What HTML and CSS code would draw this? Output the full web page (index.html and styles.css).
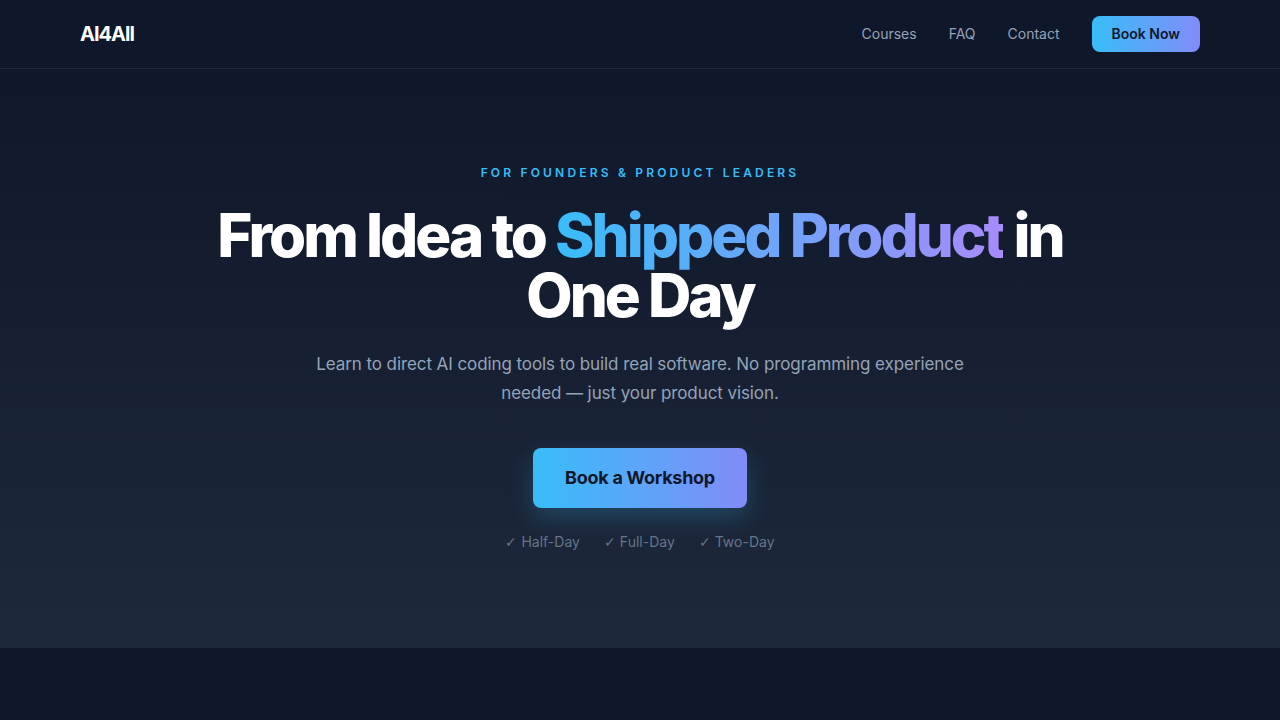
FILE: index.html
```html
<!DOCTYPE html>
<html>
<head>
  <meta charset="UTF-8">
  <title>AI4All</title>
  <link rel="stylesheet" href="styles.css">
</head>
<body>
  <header class="site-header">
    <div class="nav-inner">
      <a class="logo" href="#">AI4All</a>
      <nav class="nav-links">
        <a href="#">Courses</a>
        <a href="#">FAQ</a>
        <a href="#">Contact</a>
        <a class="btn-small" href="#">Book Now</a>
      </nav>
    </div>
  </header>

  <section class="hero">
    <p class="eyebrow">For Founders &amp; Product Leaders</p>
    <h1 class="hero-title">From Idea to <span class="grad">Shipped Product</span> in One Day</h1>
    <p class="hero-sub">Learn to direct AI coding tools to build real software. No programming experience needed — just your product vision.</p>
    <a class="btn-big" href="#">Book a Workshop</a>
    <ul class="formats">
      <li><span class="tick">✓</span> Half-Day</li>
      <li><span class="tick">✓</span> Full-Day</li>
      <li><span class="tick">✓</span> Two-Day</li>
    </ul>
  </section>

  <section class="next"></section>
</body>
</html>
```

FILE: styles.css
```css
* { box-sizing: border-box; }
body {
  margin: 0;
  font-family: Inter, "Noto Sans", sans-serif;
  background: #0f172a;
  color: #fff;
}
a { text-decoration: none; }

.site-header { border-bottom: 1px solid #1e293b; }
.nav-inner {
  height: 68px;
  padding: 0 80px;
  display: flex;
  align-items: center;
  justify-content: space-between;
}
.logo {
  color: #fff;
  font-size: 20px;
  font-weight: 700;
  letter-spacing: -0.05em;
}
.nav-links {
  display: flex;
  align-items: center;
  gap: 32px;
  padding-bottom: 1px;
}
.nav-links a {
  color: #94a3b8;
  font-size: 14px;
}
.nav-links .btn-small {
  color: #0f172a;
  font-weight: 600;
  padding: 8px 20px;
  line-height: 20px;
  border-radius: 8px;
  background: linear-gradient(90deg, #38bdf8, #818cf8);
}

.hero {
  background: linear-gradient(180deg, #0f172a, #1e293b);
  padding: 94px 24px 96px;
  text-align: center;
  display: flex;
  flex-direction: column;
  align-items: center;
}
.eyebrow {
  margin: 0 0 22px;
  color: #38bdf8;
  font-size: 12px;
  line-height: 20px;
  font-weight: 600;
  letter-spacing: 0.265em;
  text-transform: uppercase;
}
.hero-title {
  margin: 0 0 25px;
  max-width: 896px;
  font-size: 60px;
  line-height: 60px;
  font-weight: 800;
  letter-spacing: -0.05em;
}
.grad {
  background: linear-gradient(90deg, #38bdf8, #a78bfa);
  -webkit-background-clip: text;
  background-clip: text;
  color: transparent;
}
.hero-sub {
  margin: 0 0 39px;
  max-width: 672px;
  color: #94a3b8;
  font-size: 17px;
  line-height: 29.25px;
  letter-spacing: -0.005em;
}
.btn-big {
  color: #0f172a;
  font-size: 18px;
  font-weight: 700;
  letter-spacing: -0.015em;
  line-height: 28px;
  padding: 16px 32px;
  border-radius: 8px;
  background: linear-gradient(90deg, #38bdf8, #818cf8);
  box-shadow: 0 10px 25px rgba(56, 189, 248, 0.22);
}
.formats {
  list-style: none;
  margin: 24px 0 0;
  padding: 0;
  display: flex;
  gap: 24px;
  color: #64748b;
  font-size: 14px;
  line-height: 20px;
}
.tick {
  font-family: "DejaVu Sans", sans-serif;
  font-weight: 200;
}

.next { height: 200px; background: #0f172a; }
```
